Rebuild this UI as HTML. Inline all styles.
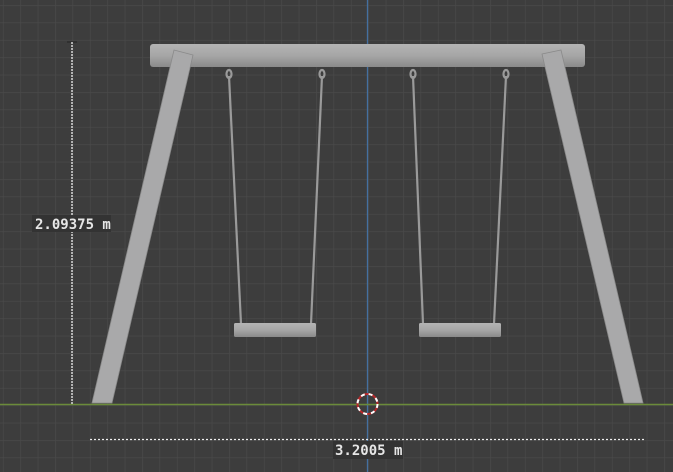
<!DOCTYPE html>
<html><head><style>
html,body{margin:0;padding:0;background:#3d3d3d;overflow:hidden}
svg{display:block}
text{font-family:"DejaVu Sans Mono","Liberation Mono",monospace;font-size:14px;fill:#e6e6e6;font-weight:bold}
</style></head><body>
<svg width="673" height="472" viewBox="0 0 673 472" xmlns="http://www.w3.org/2000/svg">
<defs>
<pattern id="g" x="2.9" y="5.1" width="17.4" height="17.4" patternUnits="userSpaceOnUse">
<path d="M0 0H17.4M0 0V17.4" stroke="#4b4b4b" stroke-width="1.2" fill="none"/>
</pattern>
<linearGradient id="bar" x1="0" y1="0" x2="0" y2="1">
<stop offset="0" stop-color="#b4b4b4"/><stop offset="0.5" stop-color="#a6a6a6"/><stop offset="1" stop-color="#8a8a8a"/>
</linearGradient>
</defs>
<rect width="673" height="472" fill="#3d3d3d"/>
<rect width="673" height="472" fill="url(#g)"/>
<line x1="367.5" y1="0" x2="367.5" y2="472" stroke="#4470a0" stroke-width="1.3"/>
<line x1="0" y1="404.5" x2="673" y2="404.5" stroke="#6b8b3a" stroke-width="1.5"/>
<g stroke="#9a9a9a" stroke-width="2.2" fill="none">
<line x1="229" y1="76" x2="241" y2="324"/><line x1="322" y1="76" x2="311" y2="324"/>
<line x1="413" y1="76" x2="423" y2="324"/><line x1="506" y1="76" x2="494" y2="324"/>
<ellipse cx="229" cy="74" rx="2.5" ry="4"/><ellipse cx="322" cy="74" rx="2.5" ry="4"/>
<ellipse cx="413" cy="74" rx="2.5" ry="4"/><ellipse cx="506" cy="74" rx="2.5" ry="4"/>
</g>
<rect x="150" y="44" width="435" height="23" rx="3" fill="url(#bar)"/>
<polygon points="174,50 193,55 112,403 92,403" fill="#a9a9aa" stroke="#8a8a8a" stroke-width="0.8"/>
<polygon points="542,54 561,50 643,403 624,403" fill="#a9a9aa" stroke="#8a8a8a" stroke-width="0.8"/>
<rect x="234" y="323" width="82" height="14" rx="1.5" fill="url(#bar)"/>
<rect x="419" y="323" width="82" height="14" rx="1.5" fill="url(#bar)"/>
<line x1="67" y1="42" x2="77" y2="42" stroke="#222" stroke-width="1"/>
<line x1="72" y1="42" x2="72" y2="404" stroke="#eee" stroke-width="1.3" stroke-dasharray="2,1"/>
<rect x="32" y="215" width="79" height="17" fill="#333"/>
<text x="35" y="229">2.09375 m</text>
<line x1="90" y1="439.5" x2="646" y2="439.5" stroke="#eee" stroke-width="1.3" stroke-dasharray="2,2"/>
<rect x="333" y="441" width="70" height="18" fill="#333"/>
<text x="335" y="455">3.2005 m</text>
<circle cx="367.5" cy="404" r="10" fill="none" stroke="#b8282a" stroke-width="2"/>
<circle cx="367.5" cy="404" r="10" fill="none" stroke="#fff" stroke-width="2" stroke-dasharray="4,4"/>
</svg>
</body></html>
